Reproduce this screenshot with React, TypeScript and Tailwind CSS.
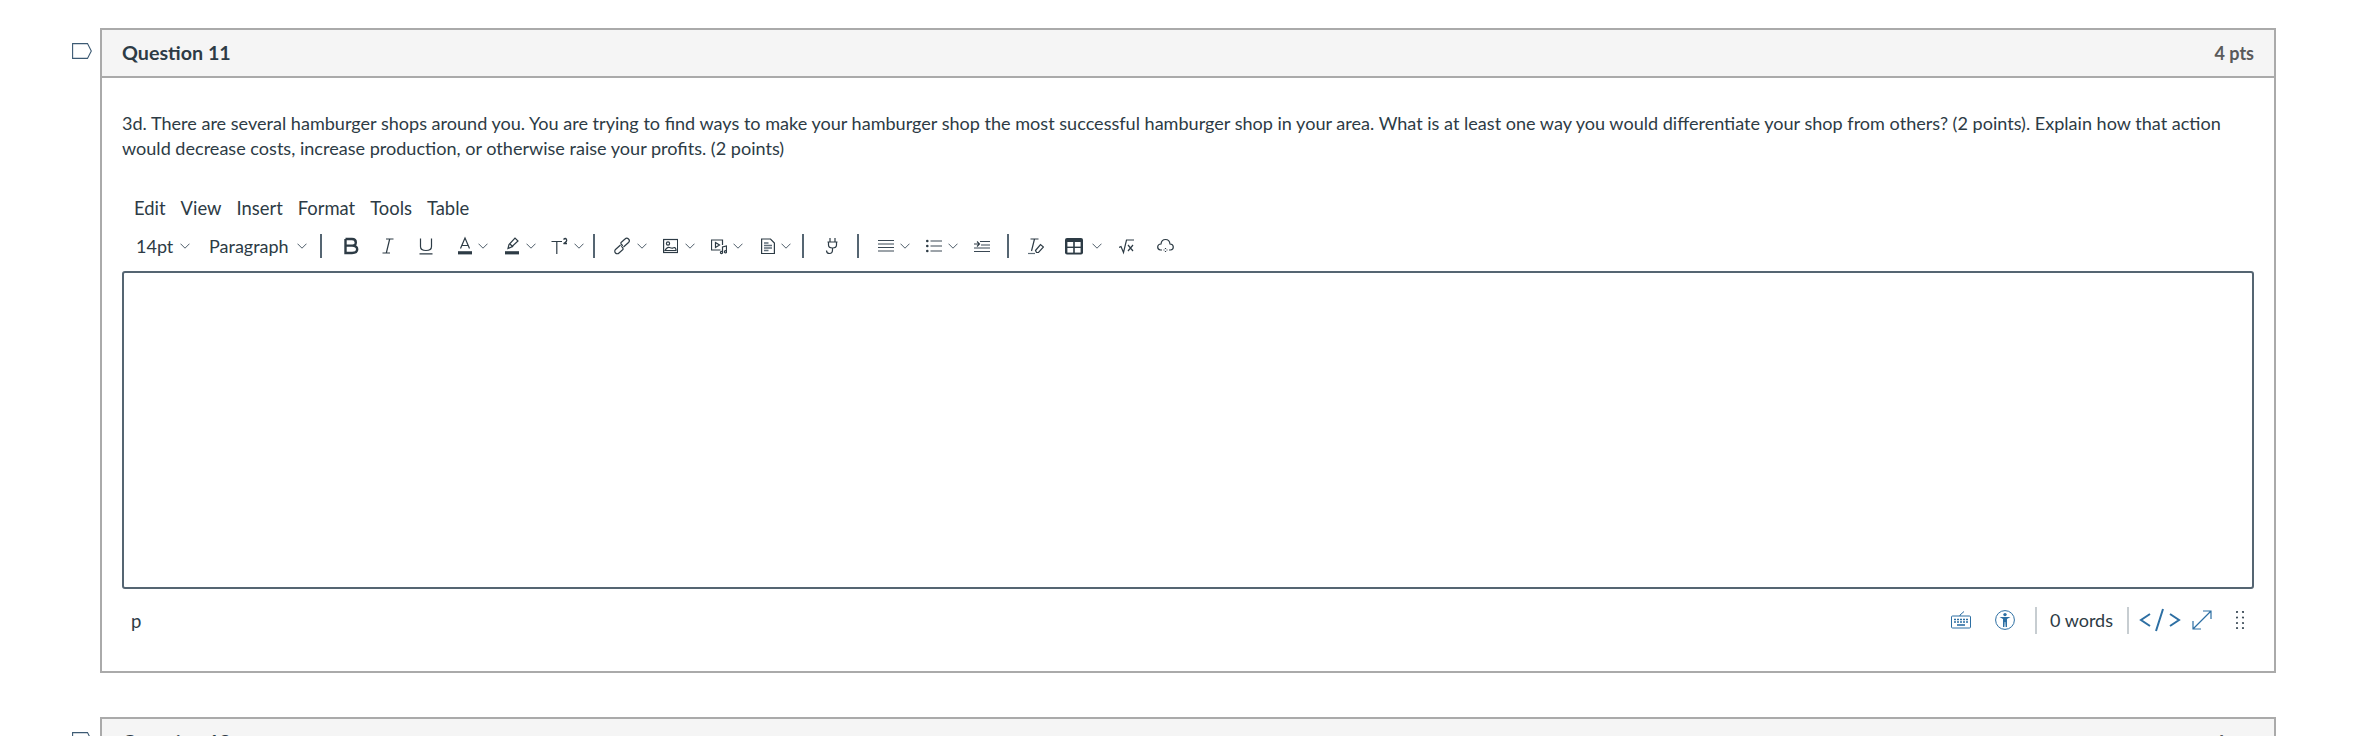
import type { ReactNode } from "react";

const Chev = ({ className = "" }: { className?: string }) => (
  <svg viewBox="0 0 10 6" className={`w-[10px] h-[6px] shrink-0 ${className}`} fill="none" stroke="#4f5e6a" strokeWidth="1">
    <path d="M0.5 0.7 5 5.2 9.5 0.7" />
  </svg>
);

const Sep = ({ className = "" }: { className?: string }) => <div className={`w-[2px] h-[24px] shrink-0 bg-[#556572] ${className}`} />;

function Ico({ w, className = "", children }: { w: number; className?: string; children: ReactNode }) {
  return (
    <svg viewBox={`0 0 ${w} 20`} width={w} height={20} className={`shrink-0 ${className}`} fill="none" stroke="#2d3b45" strokeWidth="1.2">
      {children}
    </svg>
  );
}

function Flag({ className = "" }: { className?: string }) {
  return (
    <svg viewBox="0 0 20 16" className={`w-[20px] h-[16px] shrink-0 ${className}`} fill="none" stroke="#3c5a73" strokeWidth="1.1">
      <path d="M0.6 0.6H15.5L19.3 8 15.5 15.4H0.6Z" />
    </svg>
  );
}

function Toolbar() {
  return (
    <div className="flex items-center h-[34px] text-[18px] leading-none">
      <span className="ml-[14px] w-[37px]">14pt</span>
      <Chev className="ml-[7px]" />
      <span className="ml-[19px] w-[79px]">Paragraph</span>
      <Chev className="ml-[9px]" />
      <Sep className="ml-[13px]" />
      {/* bold */}
      <Ico w={16} className="ml-[21px]">
        <path d="M2.5 3H9Q12.8 3 12.8 6.4T9 9.6H2.5M9 9.6Q14.2 9.6 14.2 13.3T9 17H2.5V3" strokeWidth="2.4" />
      </Ico>
      {/* italic */}
      <Ico w={12} className="ml-[23px]">
        <path d="M4 3H11.5M.5 17H8M7.7 3 4.3 17" />
      </Ico>
      {/* underline */}
      <Ico w={14} className="ml-[25px]">
        <path d="M1.5 2.5V10.5Q1.5 14.5 7 14.5T12.5 10.5V2.5M0.5 17.8H13.5" />
      </Ico>
      {/* text colour */}
      <Ico w={14} className="ml-[25px]">
        <path d="M2.5 12.5 7 2 11.5 12.5M4 9.5H10" />
        <path d="M0 16.8H14" strokeWidth="3.2" />
      </Ico>
      <Chev className="ml-[6px]" />
      {/* highlight */}
      <Ico w={14} className="ml-[17px]">
        <path d="M3 12.5 4 8.5 10 2 13 5 6.5 11 3 12.5Z" />
        <path d="M5 8 8 11" />
        <path d="M0 16.8H14" strokeWidth="3.2" />
      </Ico>
      <Chev className="ml-[7px]" />
      {/* superscript */}
      <Ico w={17} className="ml-[15px]">
        <path d="M.5 5.5H11M5.8 5.5V18" />
        <path d="M12.5 3.5Q14.5 1.5 15.5 3.5T12.5 7.5H16" strokeWidth="1.3" />
      </Ico>
      <Chev className="ml-[6px]" />
      <Sep className="ml-[9px]" />
      {/* link */}
      <Ico w={16} className="ml-[19px]">
        <path d="M6.5 9 1.5 13.5A2.4 2.4 0 0 0 5 17L9 13.5A2.4 2.4 0 0 0 7 10.5" />
        <path d="M9.5 11 14.5 6.5A2.4 2.4 0 0 0 11 3L7 6.5A2.4 2.4 0 0 0 9 9.5" />
      </Ico>
      <Chev className="ml-[7px]" />
      {/* image */}
      <Ico w={15} className="ml-[16px]">
        <rect x="0.6" y="3.5" width="14" height="13" />
        <circle cx="5" cy="7.5" r="1.6" />
        <path d="M2 14.5Q4 10.5 6.5 11.5T10 12Q12 10.5 13 13.5V14.5Z" />
      </Ico>
      <Chev className="ml-[7px]" />
      {/* media */}
      <Ico w={16} className="ml-[16px]">
        <path d="M9.5 14H.5V4H11.5V9" />
        <path d="M4.5 6.5 8.5 9 4.5 11.5Z" />
        <path d="M11.5 16.5V11L15.5 10V15.5" />
        <circle cx="10.5" cy="16.5" r="1.1" />
        <circle cx="14.5" cy="15.8" r="1.1" />
      </Ico>
      <Chev className="ml-[6px]" />
      {/* document */}
      <Ico w={14} className="ml-[18px]">
        <path d="M.6 3H9.5L13.4 7V17.5H.6Z" />
        <path d="M3 7H7.5M3 9.5H11M3 12H11M3 14.5H7.5" strokeWidth="1.4" stroke="#5f6e7a" />
      </Ico>
      <Chev className="ml-[6px]" />
      <Sep className="ml-[11px]" />
      {/* plug */}
      <Ico w={15} className="ml-[20px]">
        <path d="M6 2V6M11 2V6M3.5 6H13.5M4.5 6V9Q4.5 12 8.5 12T12.5 9V6M8.5 12V14Q8.5 17.5 5.5 17.5T2.5 14.5" />
      </Ico>
      <Sep className="ml-[18px]" />
      {/* align */}
      <Ico w={16} className="ml-[19px]">
        <path d="M0 4.5H16M0 8H16M0 11.5H16M0 15H16" stroke="#3a4854" />
      </Ico>
      <Chev className="ml-[6px]" />
      {/* list */}
      <Ico w={16} className="ml-[16px]">
        <path d="M4.5 5H16M4.5 10H16M4.5 15H16" stroke="#3a4854" />
        <circle cx="1.3" cy="5" r="1.3" fill="#2d3b45" stroke="none" />
        <circle cx="1.3" cy="10" r="1.3" fill="#2d3b45" stroke="none" />
        <circle cx="1.3" cy="15" r="1.3" fill="#2d3b45" stroke="none" />
      </Ico>
      <Chev className="ml-[6px]" />
      {/* indent */}
      <Ico w={16} className="ml-[16px]">
        <path d="M6 5.5H16M7 9H16M0 12H16M0 15.5H16" stroke="#3a4854" />
        <path d="M0 8H5M3 5.5 5.5 8 3 10.5" strokeWidth="1.1" />
      </Ico>
      <Sep className="ml-[17px]" />
      {/* clear formatting */}
      <Ico w={16} className="ml-[19px]">
        <path d="M2.5 3H10.5M6.5 3 3.5 15" />
        <path d="M7.5 14.5 12.5 8.5 15.5 11 10.5 16.5H8.5Z" />
        <path d="M0 17.5H7" stroke="#5f6e7a" />
      </Ico>
      {/* table */}
      <Ico w={18} className="ml-[21px]">
        <rect x="0" y="2" width="18" height="16.5" rx="2" fill="#2d3b45" stroke="none" />
        <rect x="2.4" y="6" width="5.8" height="4.6" fill="#fff" stroke="none" />
        <rect x="9.8" y="6" width="5.8" height="4.6" fill="#fff" stroke="none" />
        <rect x="2.4" y="12" width="5.8" height="4.6" fill="#fff" stroke="none" />
        <rect x="9.8" y="12" width="5.8" height="4.6" fill="#fff" stroke="none" />
      </Ico>
      <Chev className="ml-[9px]" />
      {/* equation */}
      <Ico w={15} className="ml-[17px]">
        <path d="M0 11.5 2 10.5 4.5 16.5 7.5 4H15" />
        <path d="M9 9 14 15M14 9 9 15" />
      </Ico>
      {/* cloud */}
      <Ico w={17} className="ml-[23px]">
        <path d="M5 14H3.5Q.5 13.5.7 10.8T4 8Q4.5 3.5 8.5 3.5T13 8Q16.3 8.3 16.3 11T13.5 14H12" />
        <path d="M6.5 14H7.5M9.5 14H10.5M8.5 12V13M8.5 15V16" />
      </Ico>
    </div>
  );
}

function StatusBar() {
  return (
    <div className="flex items-center h-[40px] mt-[11px] text-[#2d3b45]">
      <span className="ml-[9px] text-[18.5px] leading-none mt-[2px]">p</span>
      <div className="ml-auto flex items-center">
        <svg viewBox="0 0 20 18" className="w-[20px] h-[18px]" fill="none" stroke="#2d6fa3" strokeWidth="1">
          <rect x="0.5" y="5" width="19" height="12" rx="1" />
          <path d="M9 5 V4 L13 0.5" />
          <path d="M3 8.5H17M3 11H17" strokeWidth="1.6" strokeDasharray="2 1" />
          <path d="M6 14H14" strokeWidth="1.6" />
        </svg>
        <svg viewBox="0 0 20 20" className="ml-[24px] w-[20px] h-[20px]" fill="none" stroke="#2d6fa3" strokeWidth="1">
          <circle cx="10" cy="10" r="9.4" />
          <circle cx="10" cy="4.6" r="1.7" fill="#2d6fa3" stroke="none" />
          <path d="M4.5 7 15.5 7 12 9 12 17 10.6 17 10.3 12 9.7 12 9.4 17 8 17 8 9Z" fill="#2d6fa3" stroke="none" />
        </svg>
        <div className="ml-[20px] w-[2px] h-[27px] bg-[#c7cdd1]" />
        <span className="ml-[13px] w-[63px] text-[18px] leading-none whitespace-nowrap">0 words</span>
        <div className="ml-[14px] w-[2px] h-[27px] bg-[#c7cdd1]" />
        <svg viewBox="0 0 42 24" className="ml-[10px] w-[42px] h-[24px]" fill="none" stroke="#2d6fa3" strokeWidth="2">
          <path d="M11 6 2 12 11 18M31 6 40 12 31 18M24 1 17 23" />
        </svg>
        <svg viewBox="0 0 20 20" className="ml-[11px] w-[20px] h-[20px]" fill="none" stroke="#2d6fa3" strokeWidth="1.2">
          <path d="M1 19 19 1M11 1H19V9M1 11V19H9" />
        </svg>
        <svg viewBox="0 0 8 18" className="ml-[24px] w-[8px] h-[18px]" fill="#3f4e5a">
          {[1, 6.5, 12, 17].map((y) =>
            [1, 7].map((x) => <circle key={`${x}-${y}`} cx={x} cy={y} r="1.1" />)
          )}
        </svg>
        <div className="w-[10px]" />
      </div>
    </div>
  );
}

function CardHeader({ title, pts }: { title: string; pts: string }) {
  return (
    <div className="flex items-center justify-between h-[48px] px-[20px] bg-[#f5f5f5] border-b-2 border-[#aaaaaa]">
      <span className="text-[19.7px] font-bold text-[#2d3b45] whitespace-nowrap">{title}</span>
      <span className="text-[18px] font-bold text-[#5a5a5a] whitespace-nowrap">{pts}</span>
    </div>
  );
}

export default function App() {
  return (
    <div className="h-[736px] overflow-hidden bg-white pt-[28px] font-['Lato','Noto_Sans',sans-serif] text-[#2d3b45]">
      <div className="flex pl-[72px] pr-[78px]">
        <Flag className="mt-[15px] mr-[8px]" />
        <div className="flex-1 min-w-0 border-2 border-[#aaaaaa] h-[645px]">
          <CardHeader title="Question 11" pts="4 pts" />
          <div className="px-[20px] pt-[33px]">
            <p className="text-[18.07px] leading-[25px]">
              3d. There are several hamburger shops around you. You are trying to find ways to make your hamburger shop the most successful hamburger shop in your area. What is at least one way you would differentiate your shop from others? (2 points). Explain how that action would decrease costs, increase production, or otherwise raise your profits. (2 points)
            </p>
            <div className="flex items-center h-[30px] mt-[32px] pl-[12px] gap-[15px] text-[18.4px] leading-none">
              <span>Edit</span>
              <span>View</span>
              <span>Insert</span>
              <span>Format</span>
              <span>Tools</span>
              <span>Table</span>
            </div>
            <div className="mt-[6px]">
              <Toolbar />
            </div>
            <div className="mt-[8px] h-[318px] border-2 border-[#556572] rounded-[3px]" />
            <StatusBar />
          </div>
        </div>
      </div>
      <div className="flex pl-[72px] pr-[78px] mt-[44px]">
        <Flag className="mt-[15px] mr-[8px]" />
        <div className="flex-1 min-w-0 border-2 border-[#aaaaaa]">
          <CardHeader title="Question 12" pts="4 pts" />
        </div>
      </div>
    </div>
  );
}
